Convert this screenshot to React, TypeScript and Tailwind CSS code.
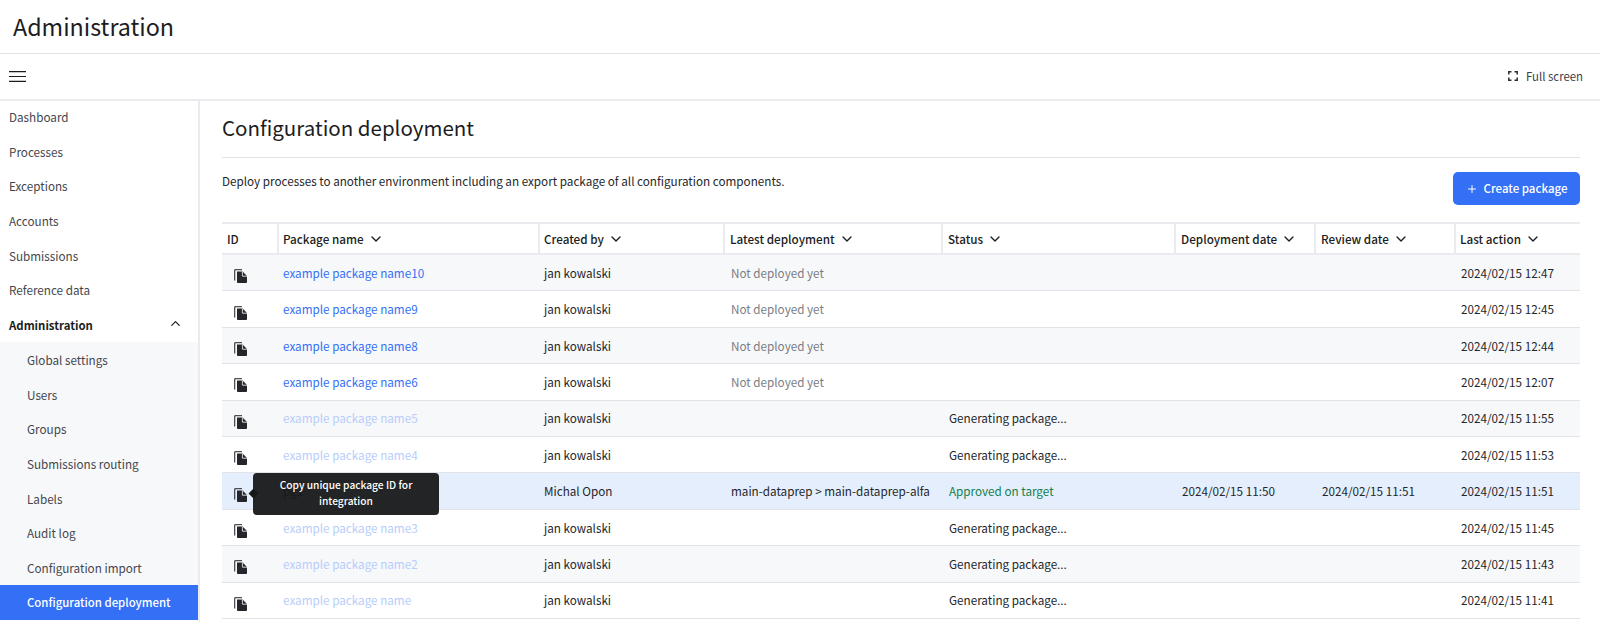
import { ChevronDown, ChevronUp, Plus } from 'lucide-react';

const font = "font-['Noto_Sans_CJK_SC','Noto_Sans',sans-serif]";

const topItems = ['Dashboard', 'Processes', 'Exceptions', 'Accounts', 'Submissions', 'Reference data'];
const subItems = ['Global settings', 'Users', 'Groups', 'Submissions routing', 'Labels', 'Audit log', 'Configuration import'];

const columns = [
  { label: 'Package name', width: 'w-[261px]', pad: 'pl-[4px]' },
  { label: 'Created by', width: 'w-[185px]', pad: 'pl-[4px]' },
  { label: 'Latest deployment', width: 'w-[218px]', pad: 'pl-[5px]' },
  { label: 'Status', width: 'w-[233px]', pad: 'pl-[5px]' },
  { label: 'Deployment date', width: 'w-[140px]', pad: 'pl-[5px]' },
  { label: 'Review date', width: 'w-[140px]', pad: 'pl-[5px]' },
  { label: 'Last action', width: 'flex-1', pad: 'pl-[4px]' },
];

const rows = [
  { name: 'example package name10', by: 'jan kowalski', latest: 'Not deployed yet', action: '2024/02/15 12:47', faded: false },
  { name: 'example package name9', by: 'jan kowalski', latest: 'Not deployed yet', action: '2024/02/15 12:45', faded: false },
  { name: 'example package name8', by: 'jan kowalski', latest: 'Not deployed yet', action: '2024/02/15 12:44', faded: false },
  { name: 'example package name6', by: 'jan kowalski', latest: 'Not deployed yet', action: '2024/02/15 12:07', faded: false },
  { name: 'example package name5', by: 'jan kowalski', status: 'Generating package...', action: '2024/02/15 11:55', faded: true },
  { name: 'example package name4', by: 'jan kowalski', status: 'Generating package...', action: '2024/02/15 11:53', faded: true },
  { name: 'pg1', by: 'Michal Opon', deployed: 'main-dataprep > main-dataprep-alfa', status: 'Approved on target', date: '2024/02/15 11:50', review: '2024/02/15 11:51', action: '2024/02/15 11:51', faded: false, active: true },
  { name: 'example package name3', by: 'jan kowalski', status: 'Generating package...', action: '2024/02/15 11:45', faded: true },
  { name: 'example package name2', by: 'jan kowalski', status: 'Generating package...', action: '2024/02/15 11:43', faded: true },
  { name: 'example package name', by: 'jan kowalski', status: 'Generating package...', action: '2024/02/15 11:41', faded: true },
];

function CopyIcon() {
  return (
    <svg width="13" height="14" viewBox="0 0 13 14" className="block text-[#24262b]">
      <path d="M0 11.500V1.500C0 .7.6 0 1.500 0H8v1.300H1.800c-.3 0-.5.2-.5.5v9.700z" fill="currentColor" opacity="0.8" />
      <path d="M3 2.600h5.600L13 7v5.900c0 .6-.5 1.100-1.100 1.100H4.100C3.500 14 3 13.500 3 12.900z" fill="currentColor" />
      <path d="M8.400 2.600v4.600H13" fill="none" stroke="#fff" strokeWidth="0.8" />
    </svg>
  );
}

function FullScreenIcon() {
  return (
    <svg width="10" height="10" viewBox="0 0 10 10" fill="none" stroke="#2b2d33" strokeWidth="1.5">
      <path d="M.8 3.500V.8h2.700M6.500.8h2.700v2.700M9.200 6.500v2.700H6.500M3.500 9.200H.8V6.500" />
    </svg>
  );
}

function MenuIcon() {
  return (
    <svg width="17" height="11" viewBox="0 0 17 11" fill="none" stroke="#1b1d22" strokeWidth="1.2">
      <path d="M0 .6h17M0 5.500h17M0 10.400h17" />
    </svg>
  );
}

export default function App() {
  return (
    <div className={`${font} w-[1600px] h-[622px] overflow-hidden bg-white text-[11.7px] text-[#24262b] flex flex-col`}>
      <header className="h-[54px] shrink-0 flex items-center pl-[13px] border-b border-[#e1e3e8]">
        <h1 className="text-[23.300px] text-[#1b1d22]">Administration</h1>
      </header>
      <div className="h-[47px] shrink-0 flex items-center justify-between pl-[9px] pr-[17px] border-b-2 border-[#e9ebef]">
        <MenuIcon />
        <div className="flex items-center gap-[8px] text-[11.400px] text-[#3d4048]">
          <FullScreenIcon />
          <span>Full screen</span>
        </div>
      </div>
      <div className="flex flex-1 min-h-0">
        <aside className="w-[200px] shrink-0 border-r-2 border-[#e9ebef] text-[#44464d]">
          <div className="-mt-[1px]">
            {topItems.map((item) => (
              <div key={item} className="h-[34.650px] pb-[1px] flex items-center pl-[9px]">{item}</div>
            ))}
            <div className="h-[34.650px] flex items-center justify-between pl-[9px] pr-[15px] text-[11.400px] font-semibold text-[#1b1d22]">
              <span>Administration</span>
              <ChevronUp size={15} strokeWidth={2} className="-mt-[3px]" />
            </div>
            <div className="bg-[#f7f8fa]">
              {subItems.map((item) => (
                <div key={item} className="h-[34.650px] flex items-center pl-[27px]">{item}</div>
              ))}
              <div className="h-[34.650px] flex items-center pl-[27px] bg-[#3370f6] text-[11.400px] text-white font-medium">Configuration deployment</div>
            </div>
          </div>
        </aside>
        <main className="flex-1 min-w-0 pl-[22px] pr-[20px]">
          <h2 className="h-[57px] pb-[3px] flex items-center text-[20.500px] text-[#1b1d22] border-b border-[#e1e3e8]">Configuration deployment</h2>
          <div className="h-[64px] flex items-start justify-between">
            <p className="pt-[14px] leading-[18px] text-[#24262b]">Deploy processes to another environment including an export package of all configuration components.</p>
            <button className="mt-[14px] h-[33px] w-[127px] flex items-center justify-center gap-[6px] rounded-[5px] bg-[#3370f6] text-[11.500px] text-white font-medium">
              <Plus size={12} strokeWidth={2} />
              Create package
            </button>
          </div>
          <div className="flex h-[33px] items-stretch border-y-2 border-[#e9ebef] text-[11.700px] font-medium text-[#1b1d22]">
            <div className="w-[55px] shrink-0 flex items-center pl-[5px]">ID</div>
            {columns.map((col) => (
              <div key={col.label} className={`${col.width} ${col.pad} shrink-0 flex items-center gap-[4px] border-l-2 border-[#e9ebef]`}>
                <span>{col.label}</span>
                <ChevronDown size={16} strokeWidth={2} />
              </div>
            ))}
          </div>
          {rows.map((row, i) => (
            <div
              key={row.name}
              className={`relative flex h-[36.400px] items-center whitespace-nowrap border-b border-[#e1e3e8] ${row.active ? 'bg-[#e5eefc]' : i % 2 === 0 ? 'bg-[#f7f8fa]' : 'bg-white'}`}
            >
              <div className="w-[55px] shrink-0 pl-[12px] pt-[7px]"><CopyIcon /></div>
              <div className={`w-[261px] shrink-0 pl-[6px] ${row.active ? 'text-[#24262b]' : row.faded ? 'text-[#b8cdfb]' : 'text-[#3370f6]'}`}>{row.name}</div>
              <div className="w-[185px] shrink-0 pl-[6px]">{row.by}</div>
              <div className={`w-[218px] shrink-0 pl-[8px] ${row.deployed ? '' : 'text-[#7a7d85]'}`}>{row.deployed ?? row.latest}</div>
              <div className={`w-[233px] shrink-0 pl-[8px] ${row.active ? 'text-[#11804f]' : ''}`}>{row.status}</div>
              <div className="w-[140px] shrink-0 pl-[8px]">{row.date}</div>
              <div className="w-[140px] shrink-0 pl-[8px]">{row.review}</div>
              <div className="flex-1 pl-[7px]">{row.action}</div>
              {row.active && (
                <div className="absolute left-[31px] top-[0px] w-[186px] h-[42px] z-10 rounded-[4px] bg-[#18181a]/95 text-white text-[10.200px] font-medium leading-[16.700px] whitespace-normal flex items-center justify-center text-center px-[24px] pb-[2px]">
                  <span className="absolute left-[-3px] top-[17px] w-[7px] h-[7px] rotate-45 bg-[#18181a]" />
                  Copy unique package ID for integration
                </div>
              )}
            </div>
          ))}
        </main>
      </div>
    </div>
  );
}
